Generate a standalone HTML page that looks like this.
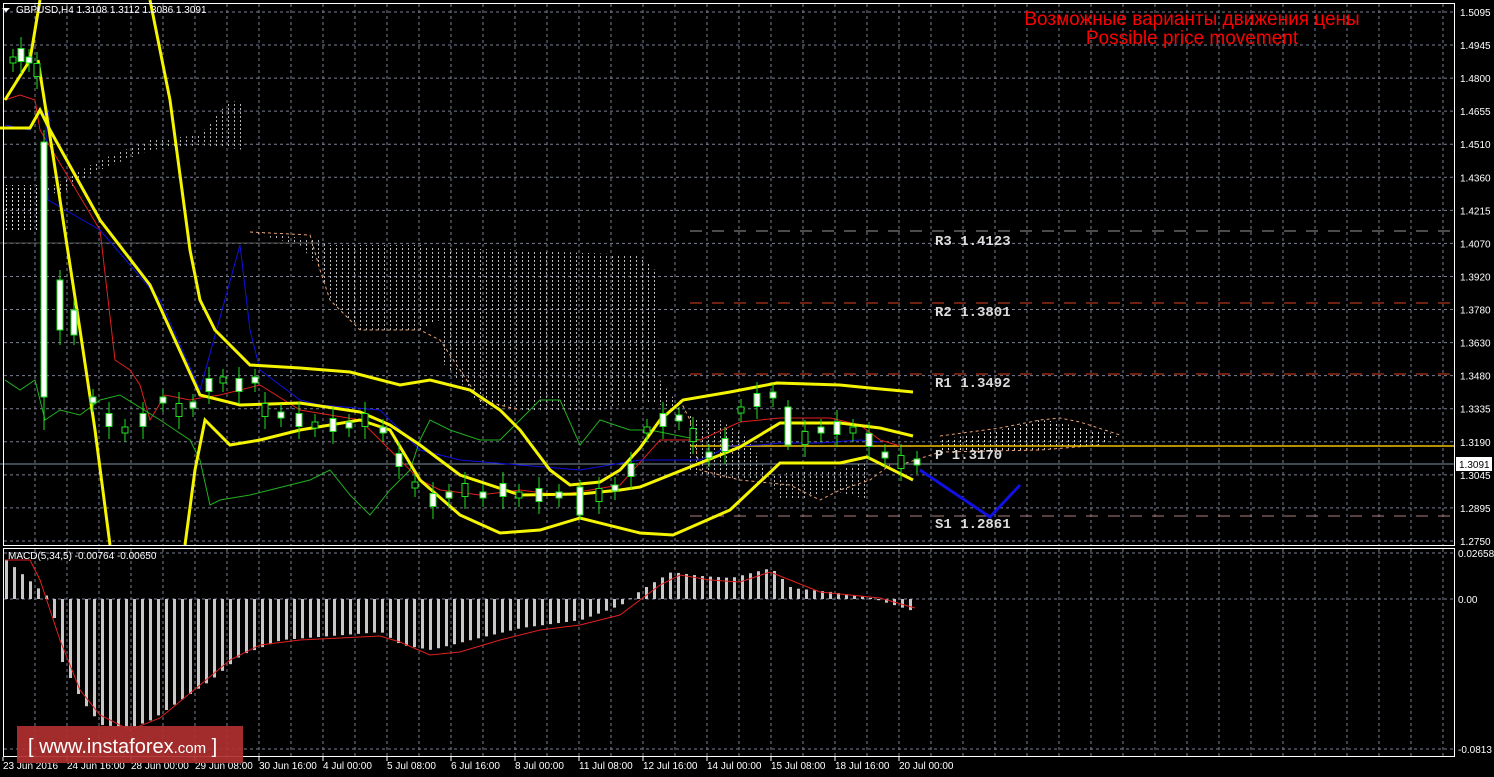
<!DOCTYPE html>
<html><head><meta charset="utf-8"><style>
html,body{margin:0;padding:0;background:#000;width:1494px;height:777px;overflow:hidden}
svg{display:block}
text{font-family:"Liberation Sans",sans-serif}
.mono{font-family:"Liberation Mono",monospace}
</style></head><body>
<svg id="s" width="1494" height="777" xmlns="http://www.w3.org/2000/svg">
<defs>
<pattern id="dots" width="6" height="4" patternUnits="userSpaceOnUse"><rect x="0" y="0" width="1" height="2" fill="#ddd"/></pattern>
<pattern id="dots2" width="6" height="4" patternUnits="userSpaceOnUse"><rect x="0" y="0" width="1" height="2" fill="#e9a070"/></pattern>
</defs>
<rect width="1494" height="777" fill="#000"/>
<g id="grid" stroke="#7a8090" stroke-width="1" stroke-dasharray="3,3"></g>
<polygon points="5,185 40,185 40,230 5,230" fill="url(#dots)"/>
<polygon points="45,190 100,160 150,140 200,135 230,100 245,105 245,150 200,145 150,150 100,170 60,195" fill="url(#dots)" opacity="0.8"/>
<polygon points="250,232 320,240 330,245 420,245 430,248 530,250 560,252 640,255 655,270 655,320 660,380 690,420 690,470 700,475 730,480 760,478 800,470 840,470 870,460 870,500 830,490 800,500 780,500 750,440 720,420 700,420 680,410 640,400 600,410 560,410 540,410 520,410 480,405 440,360 440,320 420,330 360,330 330,300 320,270 300,245 260,235" fill="url(#dots)" opacity="0.85"/>
<polyline points="250,232 310,235 320,270 330,300 360,330 420,330 440,340 460,370 480,400 520,410" fill="none" stroke="#e9a070" stroke-dasharray="3,3"/>
<polyline points="680,400 690,420 700,470 740,480 790,485 820,500 840,490 870,480 890,465" fill="none" stroke="#e9a070" stroke-dasharray="3,3"/>
<polygon points="940,440 1000,430 1040,420 1060,422 1080,428 1120,435 1100,445 1040,450 940,452" fill="url(#dots)"/>
<polyline points="940,436 1000,428 1040,420 1060,418 1080,422 1120,435" fill="none" stroke="#e9a070" stroke-dasharray="3,3"/>
<polyline points="900,465 940,452 1040,450 1100,445" fill="none" stroke="#e9a070" stroke-dasharray="3,3"/>
<line x1="690" y1="231" x2="1450" y2="231" stroke="#999" stroke-dasharray="12,10"/>
<line x1="690" y1="303" x2="1450" y2="303" stroke="#e04020" stroke-dasharray="12,10"/>
<line x1="690" y1="374" x2="1450" y2="374" stroke="#e04020" stroke-dasharray="12,10"/>
<line x1="690" y1="516" x2="1450" y2="516" stroke="#b08080" stroke-dasharray="12,10"/>
<line x1="0" y1="243" x2="320" y2="243" stroke="#555" />
<line x1="0" y1="464" x2="1454" y2="464" stroke="#8090a0"/>
<line x1="690" y1="446" x2="1454" y2="446" stroke="#f0c000" stroke-width="1.5"/>
<g class="mono" font-size="14" fill="#ddd" font-weight="bold">
<text class="mono" x="935" y="245">R3 1.4123</text><text class="mono" x="935" y="316">R2 1.3801</text><text class="mono" x="935" y="387">R1 1.3492</text><text class="mono" x="935" y="459">P 1.3170</text><text class="mono" x="935" y="528">S1 1.2861</text>
</g>
<polyline points="5,100 20,95 35,100 40,130 100,230 115,360 130,370 140,385 150,420 165,395 190,400 200,398 220,395 260,385 300,410 360,420 380,440 400,460 420,480 440,490 480,495 520,490 560,495 620,485 660,440 700,440 740,422 780,418 830,418 860,425 880,440 900,446" fill="none" stroke="#e02020" stroke-width="1"/>
<polyline points="5,125 30,130 40,110 50,120 40,80 45,95 48,200 100,230 160,300 200,390 240,245 250,330 260,370 300,400 320,405 380,410 390,420 420,450 460,460 520,465 580,470 640,460 700,460 730,446 760,445 780,443 820,443 860,440 880,442" fill="none" stroke="#1010e0" stroke-width="1"/>
<polyline points="5,380 20,390 35,380 45,420 60,410 80,415 100,400 120,395 160,420 190,440 200,460 210,505 220,500 250,495 270,490 290,485 310,480 330,470 350,495 370,515 390,490 410,470 420,440 430,420 450,430 480,440 500,440 520,420 540,400 560,400 580,445 600,420 630,430 650,430 700,440" fill="none" stroke="#20b020" stroke-width="1"/>
<g fill="none" stroke="#f5f500" stroke-width="3">
<polyline points="0,128 30,128 40,110 50,130 100,220 150,285 200,395 240,405 300,403 360,412 390,425 420,445 460,475 520,495 580,494 620,490 640,487 690,467 740,447 780,423 840,423 880,428 913,436"/>
<polyline points="5,100 30,60 40,0"/>
<polyline points="150,0 170,100 190,250 200,300 215,330 250,365 300,368 350,372 400,385 430,380 470,390 500,410 520,430 550,470 570,485 600,482 620,470 640,448 660,420 683,400 730,392 777,383 840,385 870,388 913,392"/>
<polyline points="38,60 60,200 80,330 95,430 110,545"/>
<polyline points="185,545 195,470 205,420 230,445 260,440 300,430 360,420 390,430 420,480 460,515 500,533 540,530 580,518 640,533 673,535 730,510 780,463 840,463 867,457 913,480"/>
</g>
<polyline points="920,470 990,517 1020,485" fill="none" stroke="#1010e0" stroke-width="3"/>
<g id="candles"></g>
<g stroke="#20e020">
<line x1="44" y1="130" x2="44" y2="430"/><rect x="41" y="142" width="6" height="255" fill="#fff"/>
<line x1="60" y1="270" x2="60" y2="345"/><rect x="57" y="280" width="6" height="50" fill="#fff"/>
<line x1="74" y1="300" x2="74" y2="345"/><rect x="71" y="310" width="6" height="25" fill="#fff"/>
<line x1="788" y1="400" x2="788" y2="450"/><rect x="785" y="407" width="6" height="38" fill="#fff"/>
<line x1="580" y1="480" x2="580" y2="520"/><rect x="577" y="487" width="6" height="28" fill="#fff"/>
</g>
<rect x="3.5" y="3.5" width="1451" height="542" fill="none" stroke="#fff"/>
<rect x="3.5" y="548.5" width="1451" height="208" fill="none" stroke="#fff"/>
<g id="macd"></g>
<polyline points="5,560 30,560 40,580 60,640 80,690 100,715 130,730 160,718 200,685 230,660 260,645 300,640 340,638 380,636 400,642 430,655 460,652 500,640 540,630 580,625 620,615 640,600 660,585 680,575 710,580 740,582 770,572 790,580 820,592 850,595 880,598 915,608" fill="none" stroke="#e02020" stroke-width="1"/>
<g id="axis" font-size="10" fill="#fff"></g>
<polygon points="2,8 10,8 6,12" fill="#fff"/>
<text x="16" y="13" font-size="10" fill="#fff">GBPUSD,H4  1.3108 1.3112 1.3086 1.3091</text>
<text x="8" y="559" font-size="10" fill="#fff">MACD(5,34,5) -0.00764 -0.00650</text>
<text x="1192" y="25" font-size="19" fill="#ff0000" text-anchor="middle">Возможные варианты движения цены</text>
<text x="1192" y="44" font-size="19" fill="#ff0000" text-anchor="middle">Possible price movement</text>
<rect x="1456" y="457" width="36" height="14" fill="#fff"/>
<text x="1459" y="468" font-size="10" fill="#000">1.3091</text>
<rect x="17" y="726" width="226" height="37" fill="#b03030" opacity="0.92"/>
<text x="28" y="753" font-size="20" fill="#fff">[  www.instaforex<tspan font-size="15">.com</tspan> ]</text>
</svg>
<script>
var NS="http://www.w3.org/2000/svg",g=document.getElementById('grid');
function el(p,t,a){var e=document.createElementNS(NS,t);for(var k in a)e.setAttribute(k,a[k]);p.appendChild(e);return e;}
for(var x=35;x<1454;x+=32){el(g,'line',{x1:x,y1:4,x2:x,y2:545});el(g,'line',{x1:x,y1:549,x2:x,y2:756});}
var pl=["1.5095","1.4945","1.4800","1.4655","1.4510","1.4360","1.4215","1.4070","1.3920","1.3780","1.3630","1.3480","1.3335","1.3190","1.3045","1.2895","1.2750"];
var ax=document.getElementById('axis');
for(var i=0;i<17;i++){var y=12+i*33.06;el(g,'line',{x1:4,y1:y,x2:1454,y2:y});var t=el(ax,'text',{x:1460,y:y+4});t.textContent=pl[i];}
var ml=[[553,"0.02658"],[599,"0.00"],[749,"-0.0813"]];
ml.forEach(function(m){el(g,'line',{x1:4,y1:m[0],x2:1454,y2:m[0]});var t=el(ax,'text',{x:1458,y:m[0]+4});t.textContent=m[1];});
var dl=["23 Jun 2016","24 Jun 16:00","28 Jun 00:00","29 Jun 08:00","30 Jun 16:00","4 Jul 00:00","5 Jul 08:00","6 Jul 16:00","8 Jul 00:00","11 Jul 08:00","12 Jul 16:00","14 Jul 00:00","15 Jul 08:00","18 Jul 16:00","20 Jul 00:00"];
dl.forEach(function(d,i){var t=el(ax,'text',{x:3+i*64,y:769});t.textContent=d;el(ax,'line',{x1:3+i*64,y1:757,x2:3+i*64,y2:761,stroke:'#fff'});});
var mv=[[5,560],[50,600],[60,660],[80,700],[100,725],[130,728],[150,720],[180,700],[210,680],[240,655],[280,640],[330,636],[380,632],[400,645],[430,650],[470,640],[520,628],[580,620],[620,605],[640,590],[670,572],[700,576],[730,578],[770,568],[790,588],[830,592],[870,598],[915,612]];
function interp(x){for(var i=0;i<mv.length-1;i++){if(x>=mv[i][0]&&x<=mv[i+1][0]){var f=(x-mv[i][0])/(mv[i+1][0]-mv[i][0]);return mv[i][1]+f*(mv[i+1][1]-mv[i][1]);}}return 599;}
var mg=document.getElementById('macd');
for(var x=5;x<=915;x+=8){var v=interp(x);var y1=Math.min(v,599),h=Math.max(1,Math.abs(v-599));el(mg,'rect',{x:x,y:y1,width:3,height:h,fill:'#c8c8c8'});}
var cp=[[10,60],[18,55],[26,60],[34,70],[90,400],[106,420],[122,430],[140,420],[160,400],[176,410],[190,405],[206,385],[220,380],[236,385],[252,380],[262,410],[278,415],[296,420],[312,425],[330,425],[346,425],[362,420],[380,430],[396,460],[412,485],[430,500],[446,495],[462,490],[480,495],[500,490],[516,495],[536,495],[556,495],[596,495],[612,488],[628,470],[644,430],[660,420],[676,418],[690,435],[706,455],[722,445],[738,410],[754,400],[770,395],[802,438],[818,430],[834,428],[850,430],[866,440],[882,455],[898,462],[914,462]];
var cg=document.getElementById('candles');
cp.forEach(function(c,i){var x=c[0],y=c[1],h=6+((i*7)%14),up=i%3==0;el(cg,'line',{x1:x+3,y1:y-h-5,x2:x+3,y2:y+h+6,stroke:'#20e020'});el(cg,'rect',{x:x,y:y-h/2,width:6,height:h,fill:up?'#000':'#fff',stroke:'#20e020'});});
</script>
</body></html>
